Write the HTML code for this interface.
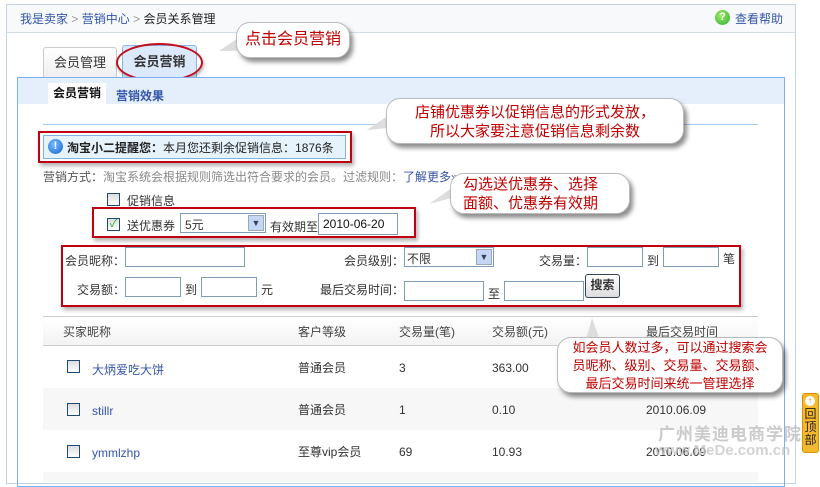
<!DOCTYPE html>
<html><head><meta charset="utf-8"><style>
*{margin:0;padding:0;box-sizing:border-box}
body{width:820px;height:480px;overflow:hidden;background:#fff;font-family:"Liberation Sans","Noto Sans CJK SC","WenQuanYi Zen Hei",sans-serif;font-size:12px;color:#333;position:relative}
.a{position:absolute;white-space:nowrap}
.blue{color:#3355aa}
.inp{position:absolute;border:1px solid #7f9db9;background:#fff;height:20px}
.cb{position:absolute;width:13px;height:13px;border:1px solid #1c4b7a;background:linear-gradient(#ddd,#fff)}
.red{position:absolute;border:2px solid #c00010;box-shadow:2px 3px 4px rgba(0,0,0,.3)}
.bub{position:absolute;background:#fff;border:1px solid #bbb;border-radius:14px;box-shadow:3px 4px 5px rgba(0,0,0,.45);color:#c00000;font-size:15px;line-height:19px;text-align:center}
</style></head><body>
<!-- outer frame -->
<div class="a" style="left:6px;top:4px;width:790px;height:480px;border:1px solid #c5d3e0"></div>
<div class="a" style="left:7px;top:5px;width:788px;height:28px;background:#f7f9fb;border-bottom:1px solid #d3dde8"></div>
<div class="a" style="left:20px;top:10px;font-size:12px"><span class="blue">我是卖家</span> <span style="color:#999">&gt;</span> <span class="blue">营销中心</span> <span style="color:#999">&gt;</span> <b style="font-weight:normal;color:#222">会员关系管理</b></div>
<div class="a" style="left:715px;top:10px;width:15px;height:15px;border-radius:50%;background:radial-gradient(circle at 40% 35%,#9e6,#3a3);color:#fff;font-size:11px;font-weight:bold;text-align:center;line-height:15px">?</div>
<div class="a blue" style="left:735px;top:10px;font-size:12px">查看帮助</div>
<!-- tabs -->
<div class="a" style="left:43px;top:47px;width:74px;height:31px;border:1px solid #ccc;border-bottom:none;background:linear-gradient(#fff,#eee);border-radius:3px 3px 0 0;text-align:center;line-height:30px;font-size:13px">会员管理</div>
<div class="a" style="left:122px;top:45px;width:75px;height:33px;border:1px solid #8ab4e8;border-bottom:none;background:#dce9fb;border-radius:3px 3px 0 0;text-align:center;line-height:32px;font-size:13px;font-weight:bold">会员营销</div>
<div class="a" style="left:116px;top:43px;width:87px;height:39px;border:2px solid #c01020;border-radius:50%;box-shadow:1px 2px 3px rgba(0,0,0,.3)"></div>
<!-- panel -->
<div class="a" style="left:17px;top:77px;width:768px;height:410px;border:1px solid #7fb0ee"></div>
<div class="a" style="left:18px;top:78px;width:766px;height:26px;background:#e5effc"></div>
<div class="a" style="left:48px;top:83px;width:58px;height:21px;background:#fff;text-align:center;line-height:21px;font-weight:bold;color:#111">会员营销</div>
<div class="a blue" style="left:116px;top:87px;font-weight:bold">营销效果</div>
<div class="a" style="left:43px;top:124px;width:715px;height:1px;background:#a9cbf2"></div>
<!-- notice -->
<div class="a" style="left:43px;top:135px;width:303px;height:24px;border:1px solid #7fb2dc;background:#e6f3fc"></div>
<div class="a" style="left:48px;top:139px;width:15px;height:15px;border-radius:50%;background:radial-gradient(circle at 40% 35%,#7bf,#16c);color:#fff;font-weight:bold;font-size:11px;text-align:center;line-height:15px">!</div>
<div class="a" style="left:67px;top:139px;color:#222"><b>淘宝小二提醒您：</b>本月您还剩余促销信息：1876条</div>
<div class="red" style="left:38px;top:131px;width:314px;height:32px"></div>
<div class="a" style="left:43px;top:168px;color:#555">营销方式：<span style="color:#888">淘宝系统会根据规则筛选出符合要求的会员。过滤规则：</span><span class="blue">了解更多»</span></div>
<div class="cb" style="left:107px;top:193px"></div>
<div class="a" style="left:127px;top:192px">促销信息</div>
<div class="cb" style="left:107px;top:218px;color:#2a2;font-size:11px;line-height:11px;text-align:center">✓</div>
<div class="a" style="left:127px;top:217px">送优惠券</div>
<div class="inp" style="left:180px;top:213px;width:86px"><span style="position:absolute;left:4px;top:2px">5元</span><span style="position:absolute;right:1px;top:1px;width:16px;height:16px;background:#c4d6f4;border:1px solid #9ab;font-size:9px;text-align:center;line-height:15px;color:#345">▼</span></div>
<div class="a" style="left:270px;top:218px">有效期至</div>
<div class="inp" style="left:318px;top:213px;width:80px;height:22px"><span style="position:absolute;left:4px;top:3px;color:#111">2010-06-20</span></div>
<div class="red" style="left:92px;top:207px;width:324px;height:31px"></div>
<!-- search -->
<div class="a" style="left:65px;top:252px">会员昵称：</div>
<div class="inp" style="left:125px;top:247px;width:120px"></div>
<div class="a" style="left:344px;top:252px">会员级别：</div>
<div class="inp" style="left:404px;top:247px;width:90px"><span style="position:absolute;left:2px;top:2px">不限</span><span style="position:absolute;right:1px;top:1px;width:16px;height:16px;background:#c4d6f4;border:1px solid #9ab;font-size:9px;text-align:center;line-height:15px;color:#345">▼</span></div>
<div class="a" style="left:539px;top:252px">交易量：</div>
<div class="inp" style="left:587px;top:247px;width:56px"></div>
<div class="a" style="left:647px;top:252px">到</div>
<div class="inp" style="left:663px;top:247px;width:56px"></div>
<div class="a" style="left:723px;top:250px">笔</div>
<div class="a" style="left:77px;top:281px">交易额：</div>
<div class="inp" style="left:125px;top:277px;width:56px"></div>
<div class="a" style="left:185px;top:281px">到</div>
<div class="inp" style="left:201px;top:277px;width:56px"></div>
<div class="a" style="left:261px;top:281px">元</div>
<div class="a" style="left:320px;top:281px">最后交易时间：</div>
<div class="inp" style="left:404px;top:281px;width:80px"></div>
<div class="a" style="left:488px;top:285px">至</div>
<div class="inp" style="left:504px;top:281px;width:80px"></div>
<div class="a" style="left:585px;top:274px;width:35px;height:24px;border:1px solid #345;border-radius:3px;background:linear-gradient(#fff,#ddd);text-align:center;line-height:20px;font-weight:bold">搜索</div>
<div class="red" style="left:61px;top:245px;width:680px;height:62px"></div>
<!-- table -->
<div class="a" style="left:43px;top:316px;width:715px;height:30px;background:linear-gradient(#fff,#f3f3f3);border-top:1px solid #ccc;border-bottom:1px solid #ccc"></div>
<div class="a" style="left:63px;top:323px;color:#444">买家昵称</div>
<div class="a" style="left:298px;top:323px;color:#444">客户等级</div>
<div class="a" style="left:399px;top:323px;color:#444">交易量(笔)</div>
<div class="a" style="left:492px;top:323px;color:#444">交易额(元)</div>
<div class="a" style="left:646px;top:323px;color:#444">最后交易时间</div>
<div class="a" style="left:43px;top:388px;width:715px;height:42px;background:#f7f7f7"></div>
<div class="a" style="left:43px;top:472px;width:715px;height:10px;background:#f7f7f7"></div>
<div class="cb" style="left:67px;top:360px"></div><div class="a blue" style="left:92px;top:361px">大炳爱吃大饼</div>
<div class="a" style="left:298px;top:359px">普通会员</div><div class="a" style="left:399px;top:361px">3</div><div class="a" style="left:492px;top:361px">363.00</div>
<div class="cb" style="left:67px;top:403px"></div><div class="a blue" style="left:92px;top:404px">stillr</div>
<div class="a" style="left:298px;top:401px">普通会员</div><div class="a" style="left:399px;top:403px">1</div><div class="a" style="left:492px;top:403px">0.10</div><div class="a" style="left:646px;top:403px">2010.06.09</div>
<div class="cb" style="left:67px;top:445px"></div><div class="a blue" style="left:92px;top:446px">ymmlzhp</div>
<div class="a" style="left:298px;top:443px">至尊vip会员</div><div class="a" style="left:399px;top:445px">69</div><div class="a" style="left:492px;top:445px">10.93</div><div class="a" style="left:646px;top:445px">2010.06.09</div>
<!-- watermark -->
<div class="a" style="left:658px;top:420px;font-size:17px;font-weight:bold;color:rgba(190,190,190,.8);letter-spacing:1px">广州美迪电商学院</div>
<div class="a" style="left:655px;top:442px;font-size:15px;font-weight:bold;color:rgba(200,200,200,.8)">www.MeDe.com.cn</div>
<!-- back to top -->
<div class="a" style="left:802px;top:393px;width:17px;height:60px;background:#f6b82c;border:1px solid #d89000;border-radius:3px;color:#222;font-size:12px;line-height:13px;text-align:center;white-space:normal;padding-top:14px">回顶部</div>
<div class="a" style="left:805px;top:396px;width:10px;height:10px;border-radius:50%;background:#fff;color:#e60;font-size:8px;text-align:center;line-height:10px">↑</div>
<!-- callouts -->
<div class="a" style="left:218px;top:40px;width:0;height:0;border-top:8px solid transparent;border-bottom:6px solid transparent;border-right:24px solid #ddd;transform:rotate(-15deg)"></div>
<div class="bub" style="left:236px;top:22px;width:114px;height:36px;line-height:34px;font-size:16px">点击会员营销</div>
<div class="a" style="left:366px;top:120px;width:0;height:0;border-top:6px solid transparent;border-bottom:6px solid transparent;border-right:24px solid #ddd;transform:rotate(-20deg)"></div>
<div class="bub" style="left:386px;top:98px;width:298px;height:46px;padding-top:4px">店铺优惠券以促销信息的形式发放，<br>所以大家要注意促销信息剩余数</div>
<div class="a" style="left:428px;top:193px;width:0;height:0;border-top:5px solid transparent;border-bottom:5px solid transparent;border-right:28px solid #ddd;transform:rotate(-25deg)"></div>
<div class="bub" style="left:450px;top:173px;width:180px;height:41px;padding-top:1px;text-align:left;padding-left:12px">勾选送优惠券、选择<br>面额、优惠券有效期</div>
<div class="a" style="left:586px;top:318px;width:0;height:0;border-left:6px solid transparent;border-right:8px solid transparent;border-bottom:22px solid #ddd"></div>
<div class="bub" style="left:557px;top:337px;width:226px;height:56px;font-size:13px;line-height:18px;padding-top:1px">如会员人数过多，可以通过搜索会<br>员昵称、级别、交易量、交易额、<br>最后交易时间来统一管理选择</div>
</body></html>
